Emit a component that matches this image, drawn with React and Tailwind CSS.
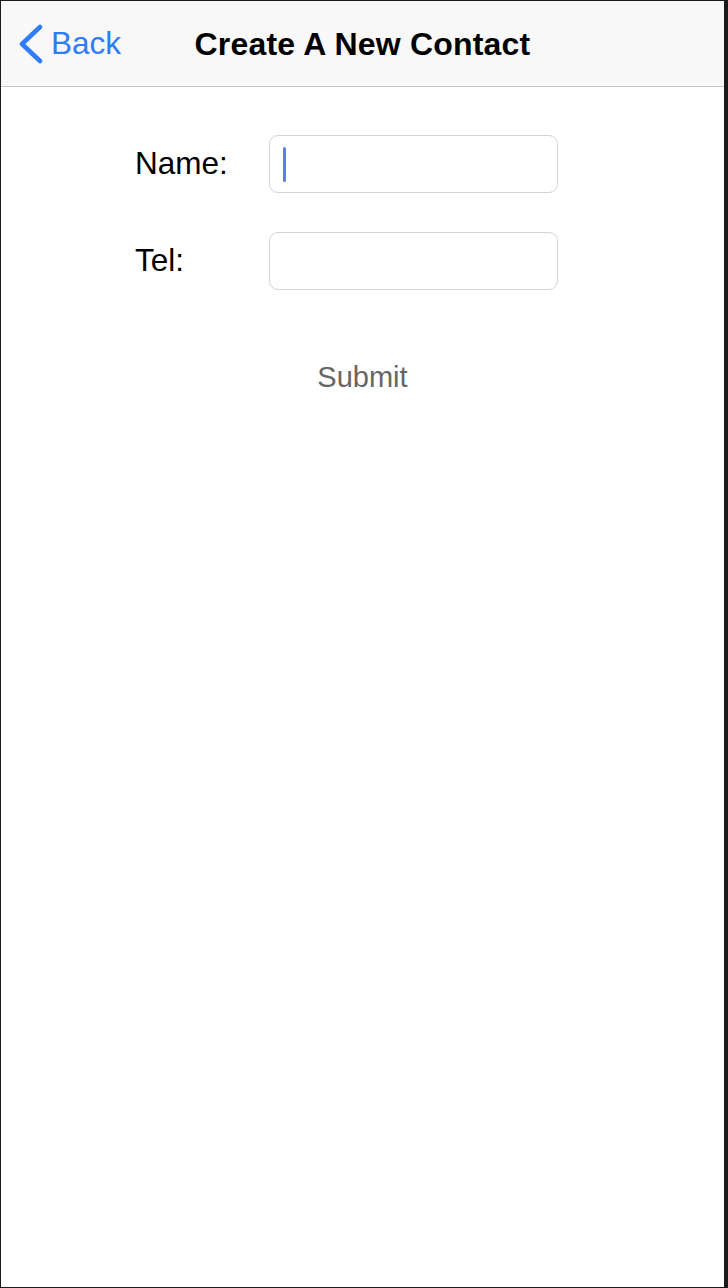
import { useState } from 'react'

function Campo({ rotulo, valor, foco, onChange }) {
  return (
    <div className="flex items-center">
      <label className="w-[134px] text-[31.5px] text-black leading-none">{rotulo}</label>
      <div className="relative w-[289px] h-[58px] rounded-[9px] border border-[#d4d4d4] bg-white flex items-center px-[13px]">
        {foco && <span className="w-[3px] h-[35px] rounded-full bg-[#5b7fe6]" />}
        <input
          value={valor}
          onChange={onChange}
          className="absolute inset-0 w-full h-full bg-transparent outline-none px-[14px] text-[28px]"
        />
      </div>
    </div>
  )
}

export default function App() {
  const [nome, setNome] = useState('')
  const [tel, setTel] = useState('')

  return (
    <div className="w-[728px] h-[1288px] bg-[#1b1b1b] pt-[1px] pl-[1px] pr-[4px] pb-[1px]" style={{ fontFamily: '"Liberation Sans", Arial, sans-serif' }}>
      <div className="h-full bg-white flex flex-col">
        <header className="h-[86px] bg-[#f8f8f8] border-b border-[#c6c6c6] flex items-center relative">
          <button className="absolute left-0 top-0 h-full flex items-center pl-[17px] gap-[7px] text-[#2f7cf6]">
            <svg width="26" height="40" viewBox="0 0 26 40" fill="none">
              <polyline points="22,3 4,20 22,37" stroke="#2f7cf6" strokeWidth="4.5" strokeLinecap="round" strokeLinejoin="round" />
            </svg>
            <span className="text-[31.5px] leading-none">Back</span>
          </button>
          <h1 className="w-full text-center text-[32px] font-bold text-black leading-none tracking-[0.2px]">Create A New Contact</h1>
        </header>

        <form className="flex flex-col pt-[48px] pl-[134px] gap-[39px]" onSubmit={(e) => e.preventDefault()}>
          <Campo rotulo="Name:" valor={nome} foco={nome === ''} onChange={(e) => setNome(e.target.value)} />
          <Campo rotulo="Tel:" valor={tel} onChange={(e) => setTel(e.target.value)} />
        </form>

        <div className="flex justify-center pt-[73px]">
          <button className="text-[29px] text-[#666666] leading-none">Submit</button>
        </div>
      </div>
    </div>
  )
}
